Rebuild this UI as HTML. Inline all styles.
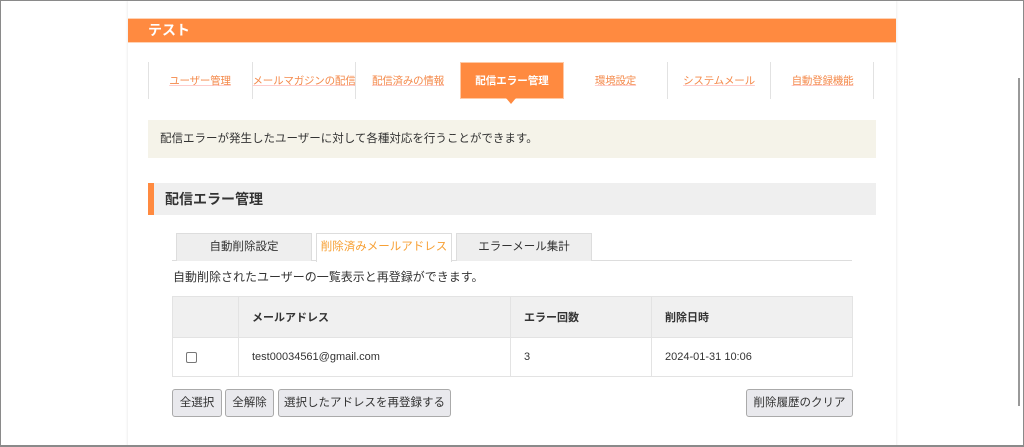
<!DOCTYPE html>
<html><head><meta charset="utf-8"><style>
*{box-sizing:border-box;margin:0;padding:0}
body{width:1024px;height:447px;overflow:hidden;background:#fff;font-family:"Liberation Sans","Noto Sans CJK JP",sans-serif;color:#333;position:relative}
.frame{position:absolute;left:0;top:0;width:1024px;height:447px;border:1px solid #8a8a8a;border-bottom:2px solid #8a8a8a;pointer-events:none}
.card{position:absolute;left:128px;top:0;width:768px;height:447px;background:#fff;box-shadow:0 0 3px rgba(0,0,0,.12)}
.abs{position:absolute}
.bar{left:128px;top:18px;width:768px;height:25px;background:#ff8a40;border-top:1px solid #ffd3b5;border-bottom:1px solid #ffd3b5;color:#fff;font-weight:bold;font-size:14px;line-height:22px;padding-left:20px}
.nav{top:63px;height:37px;font-size:10.5px;color:#f4894a;text-align:center;line-height:37px;white-space:nowrap;letter-spacing:-0.2px}
.nav a{color:#f4894a;text-decoration:underline;text-decoration-color:#fcc}
.sep{top:62px;width:1px;height:37px;background:#e2e2e2}
.act{left:460px;top:62px;width:104px;height:37px;background:#ff8a40;color:#fff;font-size:10.5px;font-weight:bold;text-align:center;line-height:37px;border:1px solid #ffc9a5;white-space:nowrap}
.tri{left:506px;top:98px;width:0;height:0;border-left:5px solid transparent;border-right:5px solid transparent;border-top:6px solid #ff8a40}
.info{left:148px;top:120px;width:728px;height:38px;background:#f5f3e9;font-size:11.5px;line-height:38px;padding-left:12px}
.sec{left:148px;top:183px;width:728px;height:32px;background:#efefef;border-left:6px solid #ff8a40;font-size:14px;font-weight:bold;line-height:32px;padding-left:11px}
.tab{top:233px;height:28px;border:1px solid #ddd;border-bottom:none;background:#eee;font-size:11.5px;text-align:center;line-height:27px}
.desc{left:173px;top:268px;font-size:12px}
table{position:absolute;left:172px;top:296px;width:681px;border-collapse:collapse;font-size:11px}
td,th{border:1px solid #e3e3e3;text-align:left;padding-left:13px}
th{background:#f0f0f0;height:41px;font-weight:bold}
td{height:39px}
.btn{top:389px;height:28px;border:1px solid #aaa;border-radius:3px;background:#e9e9ed;font-size:11.5px;text-align:center;line-height:26px;color:#333;white-space:nowrap}
</style></head><body>
<div class="card"></div>
<div class="abs bar">テスト</div>
<div class="abs sep" style="left:148px"></div>
<div class="abs nav" style="left:148px;width:104px"><a>ユーザー管理</a></div>
<div class="abs sep" style="left:252px"></div>
<div class="abs nav" style="left:252px;width:104px"><a>メールマガジンの配信</a></div>
<div class="abs sep" style="left:355px"></div>
<div class="abs nav" style="left:356px;width:104px"><a>配信済みの情報</a></div>
<div class="abs act">配信エラー管理</div>
<div class="abs tri"></div>
<div class="abs nav" style="left:564px;width:103px"><a>環境設定</a></div>
<div class="abs sep" style="left:667px"></div>
<div class="abs nav" style="left:667px;width:104px"><a>システムメール</a></div>
<div class="abs sep" style="left:770px"></div>
<div class="abs nav" style="left:771px;width:103px"><a>自動登録機能</a></div>
<div class="abs sep" style="left:873px"></div>
<div class="abs info">配信エラーが発生したユーザーに対して各種対応を行うことができます。</div>
<div class="abs sec">配信エラー管理</div>
<div class="abs" style="left:172px;top:260px;width:680px;height:1px;background:#ddd"></div>
<div class="abs tab" style="left:176px;width:136px">自動削除設定</div>
<div class="abs tab" style="left:316px;width:136px;background:#fff;color:#f7a035;height:29px">削除済みメールアドレス</div>
<div class="abs tab" style="left:456px;width:136px">エラーメール集計</div>
<div class="abs desc">自動削除されたユーザーの一覧表示と再登録ができます。</div>
<table>
<tr><th style="width:66px"></th><th style="width:272px">メールアドレス</th><th style="width:141px">エラー回数</th><th>削除日時</th></tr>
<tr><td><span style="display:inline-block;width:11px;height:11px;border:1px solid #777;border-radius:2px;vertical-align:middle"></span></td><td>test00034561@gmail.com</td><td>3</td><td>2024-01-31 10:06</td></tr>
</table>
<div class="abs btn" style="left:172px;width:50px">全選択</div>
<div class="abs btn" style="left:225px;width:49px">全解除</div>
<div class="abs btn" style="left:278px;width:173px">選択したアドレスを再登録する</div>
<div class="abs btn" style="left:746px;width:107px">削除履歴のクリア</div>
<div class="abs" style="left:1018px;top:78px;width:2px;height:328px;background:#999"></div>
<div class="frame"></div>
</body></html>
